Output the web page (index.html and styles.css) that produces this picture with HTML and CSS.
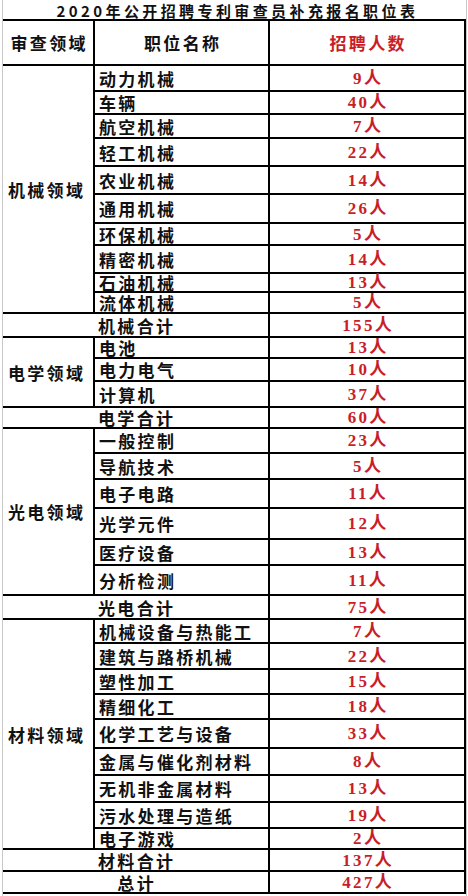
FILE: index.html
```html
<!DOCTYPE html>
<html lang="zh-CN">
<head>
<meta charset="utf-8">
<title>2020年公开招聘专利审查员补充报名职位表</title>
<link rel="stylesheet" href="styles.css">
</head>
<body>
<div class="sheet">
  <div class="title">2020年公开招聘专利审查员补充报名职位表</div>
  <table class="grid">
    <colgroup><col class="c1"><col class="c2"><col class="c3"></colgroup>
    <tr class="h45 head"><th class="center">审查领域</th><th class="center">职位名称</th><th class="center red">招聘人数</th></tr>

    <tr class="h26"><td class="dom" rowspan="10">机械领域</td><td class="pos">动力机械</td><td class="num">9人</td></tr>
    <tr class="h23"><td class="pos">车辆</td><td class="num">40人</td></tr>
    <tr class="h24"><td class="pos">航空机械</td><td class="num">7人</td></tr>
    <tr class="h28"><td class="pos">轻工机械</td><td class="num">22人</td></tr>
    <tr class="h28"><td class="pos">农业机械</td><td class="num">14人</td></tr>
    <tr class="h29"><td class="pos">通用机械</td><td class="num">26人</td></tr>
    <tr class="h22"><td class="pos">环保机械</td><td class="num">5人</td></tr>
    <tr class="h28"><td class="pos">精密机械</td><td class="num">14人</td></tr>
    <tr class="h19"><td class="pos">石油机械</td><td class="num">13人</td></tr>
    <tr class="h21"><td class="pos">流体机械</td><td class="num">5人</td></tr>
    <tr class="h24"><td class="sub" colspan="2">机械合计</td><td class="num">155人</td></tr>

    <tr class="h21"><td class="dom" rowspan="3">电学领域</td><td class="pos">电池</td><td class="num">13人</td></tr>
    <tr class="h23"><td class="pos">电力电气</td><td class="num">10人</td></tr>
    <tr class="h26"><td class="pos">计算机</td><td class="num">37人</td></tr>
    <tr class="h21"><td class="sub" colspan="2">电学合计</td><td class="num">60人</td></tr>

    <tr class="h25"><td class="dom" rowspan="6">光电领域</td><td class="pos">一般控制</td><td class="num">23人</td></tr>
    <tr class="h26"><td class="pos">导航技术</td><td class="num">5人</td></tr>
    <tr class="h29"><td class="pos">电子电路</td><td class="num">11人</td></tr>
    <tr class="h31"><td class="pos">光学元件</td><td class="num">12人</td></tr>
    <tr class="h26"><td class="pos">医疗设备</td><td class="num">13人</td></tr>
    <tr class="h30"><td class="pos">分析检测</td><td class="num">11人</td></tr>
    <tr class="h24"><td class="sub" colspan="2">光电合计</td><td class="num">75人</td></tr>

    <tr class="h24"><td class="dom" rowspan="9">材料领域</td><td class="pos">机械设备与热能工</td><td class="num">7人</td></tr>
    <tr class="h26"><td class="pos">建筑与路桥机械</td><td class="num">22人</td></tr>
    <tr class="h25"><td class="pos">塑性加工</td><td class="num">15人</td></tr>
    <tr class="h25"><td class="pos">精细化工</td><td class="num">18人</td></tr>
    <tr class="h29"><td class="pos">化学工艺与设备</td><td class="num">33人</td></tr>
    <tr class="h27"><td class="pos">金属与催化剂材料</td><td class="num">8人</td></tr>
    <tr class="h27"><td class="pos">无机非金属材料</td><td class="num">13人</td></tr>
    <tr class="h26"><td class="pos">污水处理与造纸</td><td class="num">19人</td></tr>
    <tr class="h21"><td class="pos">电子游戏</td><td class="num">2人</td></tr>
    <tr class="h22"><td class="sub" colspan="2">材料合计</td><td class="num">137人</td></tr>

    <tr class="h22"><td class="sub" colspan="2">总计</td><td class="num">427人</td></tr>
  </table>
</div>
</body>
</html>
```

FILE: styles.css
```css
html, body {
  margin: 0;
  padding: 0;
  background: #ffffff;
}

body {
  font-family: "Noto Sans CJK SC", "Noto Sans", sans-serif;
  color: #111111;
}

.sheet {
  margin-left: 2px;
  width: 463px;
  height: 896px;
  border-left: 1px solid #c9c9c9;
  border-right: 1px solid #c9c9c9;
  box-sizing: content-box;
}

.title {
  height: 17px;
  padding-top: 2px;
  line-height: 17px;
  font-size: 15px;
  font-weight: 700;
  letter-spacing: 3.4px;
  padding-left: 3.4px;
  text-align: center;
  width: 462px;
  white-space: nowrap;
}

.grid {
  border-collapse: collapse;
  table-layout: fixed;
  width: 462px;
}

.c1 { width: 91px; }
.c2 { width: 175px; }
.c3 { width: 196px; }

.grid th,
.grid td {
  border: 2px solid #000000;
  padding: 1px 0 0 0;
  font-size: 17px;
  line-height: 16px;
  font-weight: 700;
  letter-spacing: 2.3px;
  white-space: nowrap;
  vertical-align: middle;
}

.grid tr > :first-child {
  border-left: none;
}

.grid .center {
  text-align: center;
  padding-left: 2.3px;
}

.grid .red {
  color: #c81e28;
}

.grid .dom {
  text-align: left;
  padding-left: 5px;
}

.grid .pos {
  text-align: left;
  padding-left: 4px;
}

.grid .sub {
  text-align: center;
  padding-left: 2.3px;
}

.grid .num {
  text-align: center;
  padding-left: 2.3px;
  color: #c81e28;
  font-family: "Liberation Serif", "Noto Sans CJK SC", serif;
}

.h19 { height: 19px; }
.h21 { height: 21px; }
.h22 { height: 22px; }
.h23 { height: 23px; }
.h24 { height: 24px; }
.h25 { height: 25px; }
.h26 { height: 26px; }
.h27 { height: 27px; }
.h28 { height: 28px; }
.h29 { height: 29px; }
.h30 { height: 30px; }
.h31 { height: 31px; }
.h45 { height: 45px; }
```
